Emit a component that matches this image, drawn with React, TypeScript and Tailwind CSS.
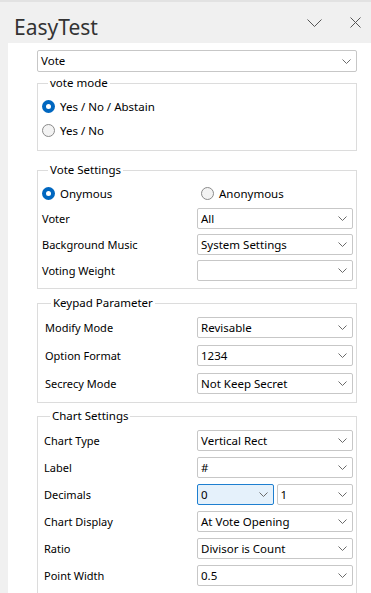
import React from 'react';

const font = { fontFamily: '"Noto Sans", "Open Sans", sans-serif' };

const Chevron = ({ className = '' }: { className?: string }) => (
  <svg width="9" height="5" viewBox="0 0 9 5" className={className}>
    <path d="M0.5 0.5 L4.5 4.5 L8.5 0.5" fill="none" stroke="#6b6b6b" strokeWidth="1" />
  </svg>
);

const Select = ({ value, focused, className = '' }: { value: string; focused?: boolean; className?: string }) => (
  <div
    className={`h-[21px] flex items-center justify-between pl-[3px] pr-[5px] rounded-[2px] border text-[11.5px] text-black ${
      focused ? 'border-[#1e7fd0] bg-[#e5f1fb]' : 'border-[#c7c7c7] bg-white'
    } ${className}`}
  >
    <span className="leading-none">{value}</span>
    <Chevron />
  </div>
);

const Radio = ({ checked, label }: { checked?: boolean; label: string }) => (
  <div className="flex items-center gap-[5px] text-[11.5px] text-black">
    {checked ? (
      <span className="w-[13px] h-[13px] rounded-full bg-[#0067c0] flex items-center justify-center">
        <span className="w-[5px] h-[5px] rounded-full bg-white" />
      </span>
    ) : (
      <span className="w-[13px] h-[13px] rounded-full border border-[#8a8a8a] bg-[#f3f3f3]" />
    )}
    <span className="leading-none">{label}</span>
  </div>
);

const Row = ({ label, children }: { label: string; children: React.ReactNode }) => (
  <div className="flex items-center justify-between h-[21px]">
    <span className="text-[11px] text-black leading-none">{label}</span>
    <div className="w-[156px]">{children}</div>
  </div>
);

const Group = ({ title, className = '', children }: { title: string; className?: string; children: React.ReactNode }) => (
  <fieldset className={`border border-[#dcdcdc] ${className}`}>
    <legend className="ml-[6px] px-[2px] text-[11.5px] leading-[16px] text-black">{title}</legend>
    {children}
  </fieldset>
);

export default function App() {
  return (
    <div className="w-[371px] h-[593px] bg-[#f0f0f0] overflow-hidden flex flex-col" style={font}>
      <div className="h-[2px] shrink-0 bg-[#e2e2e2]" />
      <div className="h-[41px] shrink-0 flex items-center pl-[14px] pr-[10px]">
        <span className="text-[21px] text-[#333333] leading-none flex-1 pt-[10px]">EasyTest</span>
        <svg width="15" height="8" viewBox="0 0 15 8" className="mr-[28px]">
          <path d="M0.5 0.5 L7.5 7.5 L14.5 0.5" fill="none" stroke="#555" strokeWidth="1" />
        </svg>
        <svg width="11" height="11" viewBox="0 0 11 11">
          <path d="M0.5 0.5 L10.5 10.5 M10.5 0.5 L0.5 10.5" fill="none" stroke="#555" strokeWidth="1" />
        </svg>
      </div>
      <div className="flex-1 ml-[8px] bg-white pl-[29px] pr-[14px] pt-[7px]">
        <Select value="Vote" className="h-[22px]" />

        <Group title="vote mode" className="mt-[3px] h-[76px] px-[4px]">
          <div className="flex flex-col gap-[11px] pt-[9px]">
            <Radio checked label="Yes / No / Abstain" />
            <Radio label="Yes / No" />
          </div>
        </Group>

        <Group title="Vote Settings" className="mt-[11px] pl-[4px] pr-[3px] pb-[7px]">
          <div className="flex items-center pt-[9px] mb-[8px]">
            <div className="w-[159px]">
              <Radio checked label="Onymous" />
            </div>
            <Radio label="Anonymous" />
          </div>
          <div className="flex flex-col gap-[5px]">
            <Row label="Voter"><Select value="All" /></Row>
            <Row label="Background Music"><Select value="System Settings" /></Row>
            <Row label="Voting Weight"><Select value="" /></Row>
          </div>
        </Group>

        <Group title="Keypad Parameter" className="mt-[6px] pl-[7px] pr-[3px] pb-[8px]">
          <div className="flex flex-col gap-[7px] pt-[6px]">
            <Row label="Modify Mode"><Select value="Revisable" /></Row>
            <Row label="Option Format"><Select value="1234" /></Row>
            <Row label="Secrecy Mode"><Select value="Not Keep Secret" /></Row>
          </div>
        </Group>

        <Group title="Chart Settings" className="mt-[5px] pl-[6px] pr-[3px] pb-[8px]">
          <div className="flex flex-col gap-[6px] pt-[6px]">
            <Row label="Chart Type"><Select value="Vertical Rect" /></Row>
            <Row label="Label"><Select value="#" /></Row>
            <Row label="Decimals">
              <div className="flex gap-[3px]">
                <Select value="0" focused className="flex-1" />
                <Select value="1" className="flex-1" />
              </div>
            </Row>
            <Row label="Chart Display"><Select value="At Vote Opening" /></Row>
            <Row label="Ratio"><Select value="Divisor is Count" /></Row>
            <Row label="Point Width"><Select value="0.5" /></Row>
          </div>
        </Group>
      </div>
    </div>
  );
}
